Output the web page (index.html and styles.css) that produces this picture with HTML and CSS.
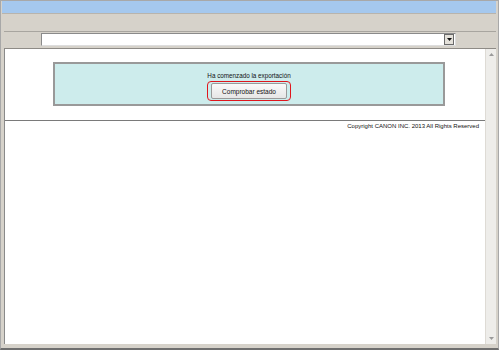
FILE: index.html
```html
<!DOCTYPE html>
<html>
<head>
<meta charset="utf-8">
<link rel="stylesheet" href="styles.css">
</head>
<body>
<div class="window">
  <div class="titlebar"></div>
  <div class="toolbar"></div>
  <div class="addressbar">
    <div class="select">
      <div class="select-btn"><svg width="5" height="3" viewBox="0 0 5 3"><path d="M0 0H5L2.5 3Z" fill="#111"/></svg></div>
    </div>
  </div>
  <div class="content">
    <div class="page">
      <div class="notice">
        <div class="notice-text">Ha comenzado la exportación</div>
        <div class="highlight"><button class="btn">Comprobar estado</button></div>
      </div>
      <div class="rule"></div>
      <div class="copyright">Copyright CANON INC. 2013 All Rights Reserved</div>
    </div>
    <div class="scrollbar">
      <svg class="arrow" width="5" height="3" viewBox="0 0 5 3"><path d="M0 3H5L2.5 0Z" fill="#9a9a9a"/></svg>
      <svg class="arrow" width="5" height="3" viewBox="0 0 5 3"><path d="M0 0H5L2.5 3Z" fill="#9a9a9a"/></svg>
    </div>
  </div>
</div>
</body>
</html>
```
FILE: styles.css
```css
html, body { margin: 0; padding: 0; background: #fff; }
body { font-family: "Liberation Sans", Arial, sans-serif; }
.window {
  width: 499px; height: 350px; box-sizing: border-box;
  border: 1px solid #a8a8a8; border-bottom: 2px solid #6f6f6f;
  background: #d6d2ca;
  padding: 0 2px 4px 3px;
  display: flex; flex-direction: column;
}
.titlebar { height: 12px; background: #a5c8ee; border-bottom: 1px solid #b8b4ad; margin-left: -2px; }
.toolbar { height: 17px; border-bottom: 1px solid #a8a59f; }
.addressbar { height: 17px; border-bottom: 1px solid #8e8b86; padding-left: 37px; box-sizing: border-box; display: flex; align-items: flex-start; padding-top: 1px; }
.select {
  width: 413px; height: 11px; background: #fff;
  border: 1px solid #8a8a8a; border-right: 1px solid #ddd; border-bottom: 1px solid #ddd;
  display: flex; justify-content: flex-end;
}
.select-btn {
  width: 10px; height: 11px; background: #e4e1da; border: 1px solid #6a6a6a; box-sizing: border-box;
  display: flex; align-items: center; justify-content: center; margin: 0 1px 0 0;
}
.content {
  flex: 1; display: flex; background: #fff;
  border-left: 1px solid #8a8a8a;
}
.page { flex: 1; }
.notice {
  margin: 13px 0 0 48px; width: 392px; height: 44px; box-sizing: border-box;
  background: #cdecec; border: 2px solid #999;
  display: flex; flex-direction: column; align-items: center;
  padding-top: 8px;
}
.notice-text { font-size: 6.3px; color: #111; line-height: 8px; }
.highlight {
  margin-top: 1px; border: 1px solid #e0161d; border-radius: 4px; padding: 1px 3px;
}
.btn {
  font-family: "Liberation Sans", Arial, sans-serif; font-size: 6.5px; color: #111;
  width: 76px; height: 16px; padding: 0;
  background: linear-gradient(#fafafa, #e6e6e6); border: 1px solid #9a9a9a; border-radius: 2px;
  display: block;
}
.rule { margin-top: 14px; height: 1px; background: #7a7a7a; }
.copyright { text-align: right; font-size: 6px; color: #111; padding-right: 6px; margin-top: 1px; line-height: 8px; }
.scrollbar {
  width: 10px; background: #eeedea; border-left: 1px solid #dedbd5;
  display: flex; flex-direction: column; justify-content: space-between; align-items: center;
  padding: 4px 0 4px;
}
.arrow { display: block; }
```
